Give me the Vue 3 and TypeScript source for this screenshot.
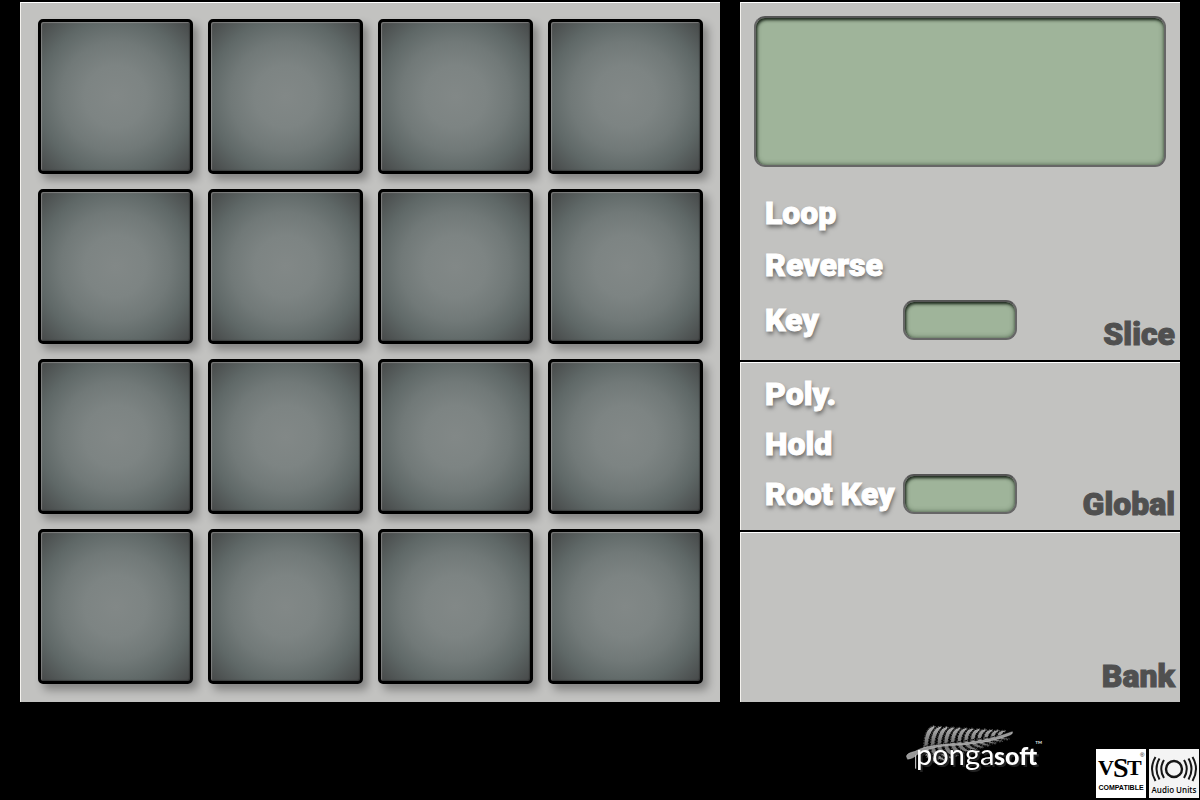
<script setup lang="ts">
interface Control {
  label: string
  display: boolean
}

const pads: number[] = Array.from({ length: 16 }, (_, i) => i + 1)

const sliceControls: Control[] = [
  { label: 'Loop', display: false },
  { label: 'Reverse', display: false },
  { label: 'Key', display: true },
]

const globalControls: Control[] = [
  { label: 'Poly.', display: false },
  { label: 'Hold', display: false },
  { label: 'Root Key', display: true },
]

function frond(i: number, up: boolean): string {
  const x = 98 + i * 20
  const y = 98 - i * 2.8
  const len = up ? 63 - i * 4 : 48 - i * 3.4
  const s = up ? -1 : 1
  const tx = x + (up ? 36 : 46) - i * 0.8
  const ty = y + s * len
  return `M${x} ${y}Q${x + 1} ${y + s * len * 0.9} ${tx - 6} ${ty}Q${tx + 3} ${ty - s * 2} ${tx - 2} ${ty - s * 5}Q${x + 15} ${y + s * len * 0.6} ${x + 13} ${y - 2}Z`
}

const fronds: string[] = Array.from({ length: 12 }, (_, i) => [frond(i, true), frond(i, false)]).flat()
</script>

<template>
  <div class="device">
    <main class="panels">
      <section class="panel pads" aria-label="Pads">
        <button v-for="pad in pads" :key="pad" class="pad" type="button" :aria-label="`Pad ${pad}`"></button>
      </section>

      <div class="side">
        <section class="panel slice">
          <output class="lcd screen" aria-label="Waveform"></output>
          <div class="group">
            <div class="controls">
              <div v-for="c in sliceControls" :key="c.label" class="control">
                <span class="label">{{ c.label }}</span>
                <output v-if="c.display" class="lcd value" :aria-label="c.label"></output>
              </div>
            </div>
            <h2>Slice</h2>
          </div>
        </section>

        <section class="panel global">
          <div class="group">
            <div class="controls">
              <div v-for="c in globalControls" :key="c.label" class="control">
                <span class="label">{{ c.label }}</span>
                <output v-if="c.display" class="lcd value" :aria-label="c.label"></output>
              </div>
            </div>
            <h2>Global</h2>
          </div>
        </section>

        <section class="panel bank">
          <h2>Bank</h2>
        </section>
      </div>
    </main>

    <footer class="footer">
      <svg class="logo" viewBox="0 0 141 50" role="img" aria-label="pongasoft">
        <defs>
          <linearGradient id="fern" gradientUnits="userSpaceOnUse" x1="0" y1="35" x2="0" y2="145">
            <stop offset="0" stop-color="#b4b4b4" />
            <stop offset="0.5" stop-color="#707070" />
            <stop offset="1" stop-color="#989898" />
          </linearGradient>
        </defs>
        <g transform="translate(-15 -10) scale(.33333)">
          <g v-for="(d, i) in fronds" :key="i">
            <path :d="d" class="frond" />
            <path :d="d" class="rim" />
          </g>
          <path class="stem" d="M46 127Q48 117 72 112Q100 94 170 90Q280 86 364 53Q368 60 350 66Q280 92 170 95Q120 98 80 121Q66 135 50 136Z" />
          <path class="stalk" d="M74 124V164" />
        </g>
        <g class="name">
          <text class="thin" x="10" y="41">ponga</text>
          <text class="bold" x="88" y="41">soft</text>
        </g>
        <text class="tm" x="129" y="24">™</text>
      </svg>

      <svg class="badge" viewBox="0 0 50 49" role="img" aria-label="VST Compatible">
        <rect width="50" height="49" fill="#fff" />
        <text class="vst" x="2" y="26">V</text>
        <text class="vst big" x="17" y="28">S</text>
        <text class="vst" x="31" y="26">T</text>
        <text class="reg" x="44" y="8">®</text>
        <text class="compatible" x="25" y="41" text-anchor="middle">COMPATIBLE</text>
      </svg>

      <svg class="badge" viewBox="0 0 50 49" role="img" aria-label="Audio Units">
        <rect width="50" height="49" fill="#f4f4f4" />
        <g fill="none" stroke="#161616" stroke-width="2">
          <circle cx="25" cy="20" r="8" stroke-width="2.4" />
          <path d="M15 11Q9.500 20 15 29M35 11Q40.500 20 35 29M10.500 9.500Q4.500 20 10.500 30.500M39.500 9.500Q45.500 20 39.500 30.500M6.500 8Q-0.500 20 6.500 32M43.500 8Q50.500 20 43.500 32" />
        </g>
        <text class="units" x="25" y="44" text-anchor="middle">Audio Units</text>
      </svg>
    </footer>
  </div>
</template>

<style>
body {
  margin: 0;
  background: #000;
}
</style>

<style scoped>
* {
  box-sizing: border-box;
}

.device {
  display: flex;
  flex-direction: column;
  min-height: 100vh;
  padding-top: 2px;
  background: #000;
  font-family: Impact, Roboto, "Liberation Sans", sans-serif;
}

.panels {
  display: grid;
  grid-template-columns: 700fr 440fr;
  gap: 20px;
  padding: 0 20px;
}

.panel {
  background: #c2c2c0;
  border-top: 1px solid #fff;
  border-left: 1px solid #f4f2ee;
}

.pads {
  display: grid;
  grid-template-columns: repeat(4, 1fr);
  gap: 15px;
  padding: 16px 17px 18px;
}

.pad {
  aspect-ratio: 1;
  padding: 0;
  border: 3px solid #000;
  border-radius: 5px;
  background: radial-gradient(circle at 50% 50%, #828887 0%, #7d8483 28%, #717978 50%, #5f6867 70%, #484b4b 94%);
  background-origin: border-box;
  box-shadow:
    inset 1px 1px 1px rgba(200, 196, 196, 0.4),
    inset -1px -1px 1px rgba(30, 30, 30, 0.4),
    5px 6px 8px rgba(0, 0, 0, 0.32);
}

.side {
  display: grid;
  grid-template-rows: auto auto 1fr;
  gap: 2px;
}

.slice {
  padding: 13px 5px 11px 13px;
}

.global {
  padding: 6px 5px 11px 13px;
}

.bank {
  display: flex;
  align-items: flex-end;
  justify-content: flex-end;
  padding: 0 5px 11px;
}

.lcd {
  display: block;
  border: 2px solid #666;
  border-top-color: #555;
  background: #9fb49a;
  box-shadow:
    inset 1px 2px 3px rgba(15, 25, 15, 0.85),
    inset 0 0 5px rgba(40, 60, 40, 0.7);
}

.screen {
  height: 151px;
  margin-right: 9px;
  border-radius: 11px;
}

.value {
  width: 114px;
  height: 40px;
  border-radius: 11px;
}

.group {
  display: flex;
  align-items: flex-end;
  justify-content: space-between;
}

.slice .group {
  padding-top: 20px;
}

.controls {
  display: grid;
  grid-auto-rows: 50px;
}

.slice .controls {
  grid-template-rows: 52px 52px 58px;
}

.control {
  display: grid;
  grid-template-columns: 138px 114px;
  align-items: center;
  padding-left: 11px;
}

.label {
  color: #fff;
  font-size: 32px;
  font-weight: 900;
  line-height: 40px;
  white-space: nowrap;
  -webkit-text-stroke: 1px #fff;
  text-shadow: 1px 3px 4px rgba(0, 0, 0, 0.5);
}

h2 {
  margin: 0;
  color: #505050;
  font-size: 32px;
  font-weight: 900;
  line-height: 30px;
  -webkit-text-stroke: 1px #505050;
}

.footer {
  display: flex;
  flex: 1;
  align-items: flex-end;
  justify-content: flex-end;
  gap: 3px;
  padding: 0 1px 2px 0;
}

.logo {
  width: 141px;
  height: 50px;
  margin: 0 46px 24px 0;
}

.badge {
  width: 50px;
  height: 49px;
}

.frond {
  fill: url(#fern);
  stroke: #000;
  stroke-width: 3;
}

.rim {
  fill: none;
  stroke: #e4e4e4;
  stroke-width: 1;
  stroke-dasharray: 4 4;
}

.stem {
  fill: #999;
  stroke: #e8e8e8;
  stroke-width: 1;
}

.stalk {
  stroke: #ddd;
  stroke-width: 3;
}

.name {
  filter: drop-shadow(2px 2px 0 #222);
}

.thin,
.bold {
  fill: #fff;
  font-family: Lato, sans-serif;
}

.thin {
  font-size: 29px;
  font-weight: 400;
}

.bold {
  font-size: 25px;
  font-weight: 900;
}

.tm {
  fill: #ddd;
  font-family: Lato, sans-serif;
  font-size: 10px;
}

.vst {
  font-family: "Liberation Serif", serif;
  font-size: 22px;
  font-weight: 700;
}

.big {
  font-size: 28px;
}

.reg {
  font-family: "Liberation Sans", sans-serif;
  font-size: 6px;
}

.compatible {
  font-family: "Liberation Sans", sans-serif;
  font-size: 7px;
  font-weight: 700;
}

.units {
  font-family: "Open Sans", sans-serif;
  font-size: 8px;
  font-weight: 600;
}
</style>
